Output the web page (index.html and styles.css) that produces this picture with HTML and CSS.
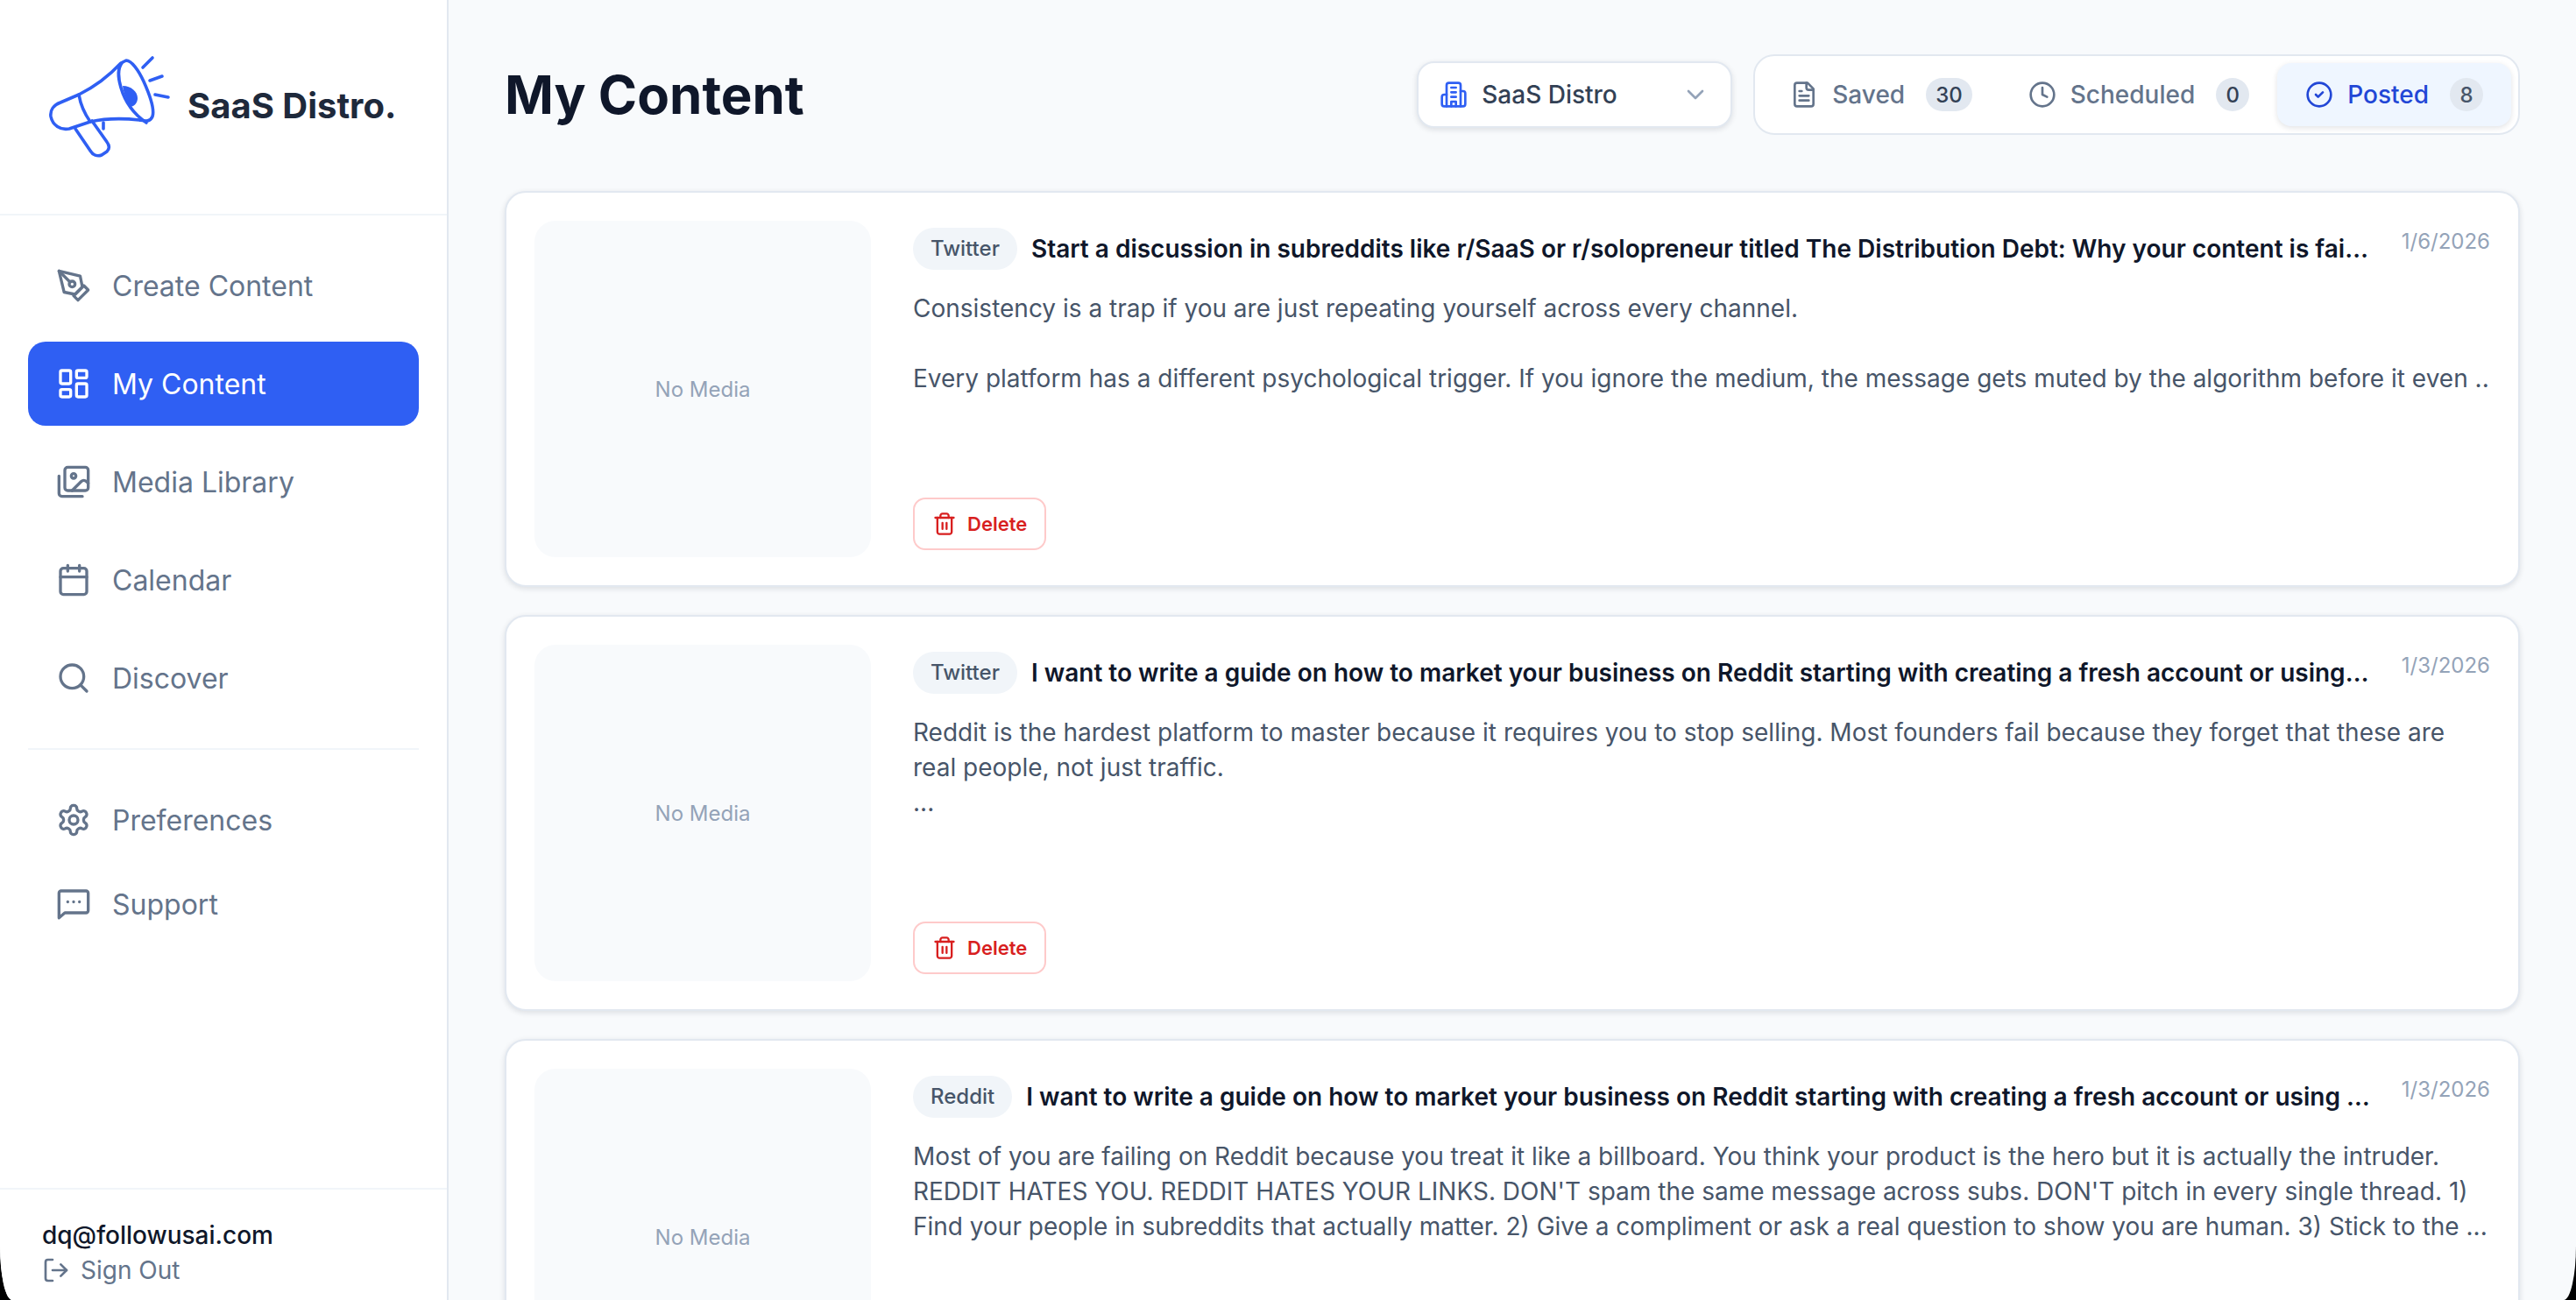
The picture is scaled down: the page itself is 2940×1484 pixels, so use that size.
FILE: index.html
```html
<!DOCTYPE html>
<html>
<head>
    <meta charset="UTF-8">
    <title>SaaS Distro - My Content</title>
    <link rel="stylesheet" href="styles.css">
</head>
<body>
    <div class="app">
        <!-- Sidebar -->
        <aside class="sidebar">
            <div class="logo">
                <svg class="logo-mark" viewBox="56 62 140 120" fill="none" stroke-linecap="round" stroke-linejoin="round">
                    <path d="M138 72c-13 14-30 27-48 36l-21 9c-8 3-12 9-11 16 2 10 11 16 21 14l24-8c18-4 38-4 56-2 6 1 12 3 15-4 2-6-1-20-10-40-6-13-14-24-20-24z"/>
                    <path d="M139 72c-5 6-4 18-1 28 4 14 13 29 29 40"/>
                    <path d="M90 108c2 12 6 21 13 31"/>
                    <path d="M86 147l17 25c3 5 8 7 13 5l6-4c3-3 3-7 0-11l-17-24"/>
                    <path d="M118 140v7"/>
                    <path d="M163 77l11-11M171 92l14-5M177 108l15 3"/>
                    <path class="logo-fill" d="M140 98c10 0 17 7 17 14 0 5-3 9-8 10-4-7-8-15-9-24z"/>
                </svg>
                <span class="logo-text">SaaS Distro.</span>
            </div>

            <nav class="nav">
                <a class="nav-item">
                    <svg class="icon" viewBox="0 0 24 24"><path d="M12 19l7-7 3 3-7 7-3-3z"/><path d="M18 13l-1.5-7.5L2 2l3.5 14.5L13 18l5-5z"/><path d="M2 2l7.6 7.6"/><circle cx="11" cy="11" r="2"/></svg>
                    Create Content
                </a>
                <a class="nav-item active">
                    <svg class="icon" viewBox="0 0 24 24"><rect x="3" y="3" width="7" height="9" rx="1"/><rect x="14" y="3" width="7" height="5" rx="1"/><rect x="14" y="12" width="7" height="9" rx="1"/><rect x="3" y="16" width="7" height="5" rx="1"/></svg>
                    My Content
                </a>
                <a class="nav-item">
                    <svg class="icon" viewBox="0 0 24 24"><path d="M18 22H4a2 2 0 0 1-2-2V8"/><path d="M22 13l-1.3-1.3a2.4 2.4 0 0 0-3.4 0L11 18"/><circle cx="12" cy="8" r="1.6"/><rect x="6" y="2" width="16" height="16" rx="2"/></svg>
                    Media Library
                </a>
                <a class="nav-item">
                    <svg class="icon" viewBox="0 0 24 24"><path d="M8 2v4M16 2v4"/><rect x="3" y="4" width="18" height="18" rx="2"/><path d="M3 10h18"/></svg>
                    Calendar
                </a>
                <a class="nav-item">
                    <svg class="icon" viewBox="0 0 24 24"><circle cx="11" cy="11" r="8"/><path d="M21 21l-4.3-4.3"/></svg>
                    Discover
                </a>
            </nav>

            <div class="nav-divider"></div>

            <nav class="nav-bottom">
                <a class="nav-item">
                    <svg class="icon" viewBox="0 0 24 24"><path d="M12.22 2h-.44a2 2 0 0 0-2 2v.18a2 2 0 0 1-1 1.73l-.43.25a2 2 0 0 1-2 0l-.15-.08a2 2 0 0 0-2.73.73l-.22.38a2 2 0 0 0 .73 2.73l.15.1a2 2 0 0 1 1 1.72v.51a2 2 0 0 1-1 1.74l-.15.09a2 2 0 0 0-.73 2.73l.22.38a2 2 0 0 0 2.73.73l.15-.08a2 2 0 0 1 2 0l.43.25a2 2 0 0 1 1 1.73V20a2 2 0 0 0 2 2h.44a2 2 0 0 0 2-2v-.18a2 2 0 0 1 1-1.73l.43-.25a2 2 0 0 1 2 0l.15.08a2 2 0 0 0 2.73-.73l.22-.39a2 2 0 0 0-.73-2.73l-.15-.08a2 2 0 0 1-1-1.74v-.5a2 2 0 0 1 1-1.74l.15-.09a2 2 0 0 0 .73-2.73l-.22-.38a2 2 0 0 0-2.73-.73l-.15.08a2 2 0 0 1-2 0l-.43-.25a2 2 0 0 1-1-1.73V4a2 2 0 0 0-2-2z"/><circle cx="12" cy="12" r="3"/></svg>
                    Preferences
                </a>
                <a class="nav-item">
                    <svg class="icon" viewBox="0 0 24 24"><path d="M2 4.500A1.500 1.500 0 0 1 3.500 3h17A1.500 1.500 0 0 1 22 4.500v12a1.500 1.500 0 0 1-1.500 1.500H6l-4 3.500z"/><path d="M8 10.500h.01M12 10.500h.01M16 10.500h.01"/></svg>
                    Support
                </a>
            </nav>

            <div class="user">
                <div class="user-email">dq@followusai.com</div>
                <a class="sign-out">
                    <svg class="icon-sm" viewBox="0 0 24 24"><path d="M9 21H5a2 2 0 0 1-2-2V5a2 2 0 0 1 2-2h4"/><path d="M16 17l5-5-5-5"/><path d="M21 12H9"/></svg>
                    Sign Out
                </a>
            </div>
        </aside>

        <!-- Main -->
        <main class="main">
            <header class="topbar">
                <h1>My Content</h1>
                <div class="topbar-right">
                    <div class="select">
                        <svg class="icon-sm blue" viewBox="0 0 24 24"><path d="M6 22V4a2 2 0 0 1 2-2h8a2 2 0 0 1 2 2v18z"/><path d="M6 12H4a2 2 0 0 0-2 2v6a2 2 0 0 0 2 2h2"/><path d="M18 9h2a2 2 0 0 1 2 2v9a2 2 0 0 1-2 2h-2"/><path d="M10 6h4M10 10h4M10 14h4M10 22v-4h4v4"/></svg>
                        <span class="select-label">SaaS Distro</span>
                        <svg class="chevron" viewBox="0 0 24 24"><path d="M6 9l6 6 6-6"/></svg>
                    </div>
                    <div class="tabs">
                        <div class="tab">
                            <svg class="icon-sm" viewBox="0 0 24 24"><path d="M15 2H6a2 2 0 0 0-2 2v16a2 2 0 0 0 2 2h12a2 2 0 0 0 2-2V7z"/><path d="M14 2v4a2 2 0 0 0 2 2h4"/><path d="M8 9h2M8 13h8M8 17h8"/></svg>
                            Saved <span class="badge">30</span>
                        </div>
                        <div class="tab">
                            <svg class="icon-sm" viewBox="0 0 24 24"><circle cx="12" cy="12" r="10"/><path d="M12 6v6l4 2"/></svg>
                            Scheduled <span class="badge">0</span>
                        </div>
                        <div class="tab active">
                            <svg class="icon-sm" viewBox="0 0 24 24"><circle cx="12" cy="12" r="10"/><path d="M9 12l2 2 4-4"/></svg>
                            Posted <span class="badge">8</span>
                        </div>
                    </div>
                </div>
            </header>

            <section class="cards">
                <article class="card">
                    <div class="media">No Media</div>
                    <div class="card-body">
                        <div class="card-head">
                            <span class="pill">Twitter</span>
                            <span class="card-title">Start a discussion in subreddits like r/SaaS or r/solopreneur titled The Distribution Debt: Why your content is fai…</span>
                            <span class="date">1/6/2026</span>
                        </div>
                        <p class="card-text">Consistency is a trap if you are just repeating yourself across every channel.

Every platform has a different psychological trigger. If you ignore the medium, the message gets muted by the algorithm before it even ..</p>
                        <button class="delete">
                            <svg class="icon-delete" viewBox="0 0 24 24"><path d="M3 6h18"/><path d="M19 6v14c0 1-1 2-2 2H7c-1 0-2-1-2-2V6"/><path d="M8 6V4c0-1 1-2 2-2h4c1 0 2 1 2 2v2"/><path d="M10 11v6M14 11v6"/></svg>
                            Delete
                        </button>
                    </div>
                </article>

                <article class="card">
                    <div class="media">No Media</div>
                    <div class="card-body">
                        <div class="card-head">
                            <span class="pill">Twitter</span>
                            <span class="card-title">I want to write a guide on how to market your business on Reddit starting with creating a fresh account or using…</span>
                            <span class="date">1/3/2026</span>
                        </div>
                        <p class="card-text">Reddit is the hardest platform to master because it requires you to stop selling. Most founders fail because they forget that these are real people, not just traffic.
...</p>
                        <button class="delete">
                            <svg class="icon-delete" viewBox="0 0 24 24"><path d="M3 6h18"/><path d="M19 6v14c0 1-1 2-2 2H7c-1 0-2-1-2-2V6"/><path d="M8 6V4c0-1 1-2 2-2h4c1 0 2 1 2 2v2"/><path d="M10 11v6M14 11v6"/></svg>
                            Delete
                        </button>
                    </div>
                </article>

                <article class="card">
                    <div class="media">No Media</div>
                    <div class="card-body">
                        <div class="card-head">
                            <span class="pill">Reddit</span>
                            <span class="card-title">I want to write a guide on how to market your business on Reddit starting with creating a fresh account or using …</span>
                            <span class="date">1/3/2026</span>
                        </div>
                        <p class="card-text">Most of you are failing on Reddit because you treat it like a billboard. You think your product is the hero but it is actually the intruder. REDDIT HATES YOU. REDDIT HATES YOUR LINKS. DON'T spam the same message across subs. DON'T pitch in every single thread. 1) Find your people in subreddits that actually matter. 2) Give a compliment or ask a real question to show you are human. 3) Stick to the ...</p>
                    </div>
                </article>
            </section>
        </main>
    </div>
</body>
</html>
```

FILE: styles.css
```css
* {
    box-sizing: border-box;
}
html, body {
    margin: 0;
    height: 100%;
    background-color: #000;
}
body {
    font-family: Inter, "Liberation Sans", sans-serif;
    color: #0f172a;
}
.app {
    display: flex;
    height: 1484px;
    overflow: hidden;
    background-color: #f8fafc;
    border-radius: 0 0 14px 14px / 0 0 62px 62px;
}

/* Sidebar */
.sidebar {
    width: 512px;
    flex-shrink: 0;
    display: flex;
    flex-direction: column;
    background-color: #fff;
    border-right: 2px solid #e2e8f0;
}
.logo {
    height: 246px;
    flex-shrink: 0;
    display: flex;
    align-items: center;
    gap: 18px;
    padding-left: 56px;
    border-bottom: 2px solid #f1f5f9;
}
.logo-mark {
    width: 140px;
    height: 120px;
    stroke: #2f5ff3;
    stroke-width: 3.6;
}
.logo-fill {
    fill: #2f5ff3;
    stroke: none;
}
.logo-text {
    margin-bottom: 4px;
    font-size: 40px;
    font-weight: 700;
    color: #1e293b;
}
.nav {
    display: flex;
    flex-direction: column;
    gap: 16px;
    padding: 32px 32px 0;
}
.nav-bottom {
    display: flex;
    flex-direction: column;
    padding: 0 32px;
}
.nav-item {
    display: flex;
    align-items: center;
    gap: 24px;
    height: 96px;
    padding-left: 32px;
    border-radius: 20px;
    font-size: 32px;
    color: #64748b;
}
.nav-item.active {
    background-color: #2f5ff3;
    color: #fff;
}
.nav-divider {
    height: 2px;
    margin: 32px 32px;
    background-color: #f1f5f9;
}
.icon, .icon-sm, .icon-delete, .chevron {
    flex-shrink: 0;
    fill: none;
    stroke: currentColor;
    stroke-linecap: round;
    stroke-linejoin: round;
}
.icon {
    width: 40px;
    height: 40px;
    stroke-width: 2;
}
.icon-sm {
    width: 32px;
    height: 32px;
    stroke-width: 2;
}
.blue {
    color: #2f5ff3;
}
.user {
    margin-top: auto;
    height: 128px;
    padding: 32px 48px 0;
    border-top: 2px solid #f1f5f9;
    font-size: 28px;
    line-height: 40px;
}
.user-email {
    font-weight: 500;
}
.sign-out {
    display: flex;
    align-items: center;
    gap: 12px;
    color: #64748b;
}

/* Main */
.main {
    flex: 1;
    min-width: 0;
    padding: 62px 64px 0;
}
.topbar {
    display: flex;
    align-items: center;
    justify-content: space-between;
    height: 92px;
    margin-bottom: 64px;
}
h1 {
    margin: 0;
    font-size: 60px;
    font-weight: 700;
    color: #0f172a;
}
.topbar-right {
    display: flex;
    align-items: center;
    gap: 24px;
}
.select {
    display: flex;
    align-items: center;
    width: 360px;
    height: 76px;
    padding: 0 24px;
    background-color: #fff;
    border: 2px solid #e2e8f0;
    border-radius: 20px;
    box-shadow: 0 2px 6px rgba(15, 23, 42, 0.12);
    font-size: 28px;
    font-weight: 500;
    color: #334155;
}
.select-label {
    flex: 1;
    margin-left: 16px;
}
.chevron {
    width: 32px;
    height: 32px;
    stroke-width: 2;
    color: #94a3b8;
}
.tabs {
    display: flex;
    padding: 8px;
    background-color: #fff;
    border: 2px solid #e2e8f0;
    border-radius: 24px;
}
.tab {
    display: flex;
    align-items: center;
    height: 72px;
    padding: 0 32px;
    border-radius: 16px;
    font-size: 28px;
    font-weight: 500;
    color: #64748b;
}
.tab .icon-sm {
    margin-right: 16px;
}
.tab.active {
    background-color: #eff6ff;
    color: #2247d6;
    box-shadow: 0 2px 6px rgba(15, 23, 42, 0.12);
}
.badge {
    display: flex;
    align-items: center;
    justify-content: center;
    min-width: 38px;
    height: 38px;
    margin-left: 24px;
    padding: 0 11px;
    border-radius: 19px;
    background-color: #e2e8f0;
    font-size: 24px;
    color: #334155;
}
.tab.active .badge {
    color: #475569;
}

/* Cards */
.cards {
    display: flex;
    flex-direction: column;
    gap: 32px;
}
.card {
    display: flex;
    flex-shrink: 0;
    gap: 48px;
    padding: 32px;
    background-color: #fff;
    border: 2px solid #e2e8f0;
    border-radius: 24px;
    box-shadow: 0 2px 6px rgba(15, 23, 42, 0.12);
}
.media {
    display: flex;
    align-items: center;
    justify-content: center;
    width: 384px;
    height: 384px;
    flex-shrink: 0;
    background-color: #f8fafc;
    border-radius: 24px;
    font-size: 24px;
    color: #94a3b8;
}
.card-body {
    flex: 1;
    min-width: 0;
    display: flex;
    flex-direction: column;
    align-items: flex-start;
    padding: 8px 0;
}
.card-head {
    display: flex;
    align-items: flex-start;
    width: 100%;
}
.pill {
    flex-shrink: 0;
    height: 48px;
    padding: 0 20px;
    border-radius: 24px;
    background-color: #f1f5f9;
    font-size: 24px;
    line-height: 48px;
    font-weight: 500;
    color: #475569;
}
.card-title {
    flex: 1;
    min-width: 0;
    margin-left: 16px;
    white-space: nowrap;
    font-size: 28px;
    font-weight: 600;
    line-height: 48px;
    color: #0f172a;
}
.date {
    flex-shrink: 0;
    font-size: 24px;
    line-height: 32px;
    color: #94a3b8;
}
.card-text {
    margin: 24px 0 0;
    font-size: 28px;
    line-height: 40px;
    color: #475569;
    white-space: pre-line;
}
.delete {
    display: flex;
    align-items: center;
    gap: 12px;
    height: 60px;
    margin-top: auto;
    padding: 0 20px;
    background-color: #fff;
    border: 2px solid #fecaca;
    border-radius: 14px;
    font-family: inherit;
    font-size: 22px;
    font-weight: 600;
    color: #d81f1f;
}
.icon-delete {
    width: 28px;
    height: 28px;
    stroke-width: 2;
}
```
